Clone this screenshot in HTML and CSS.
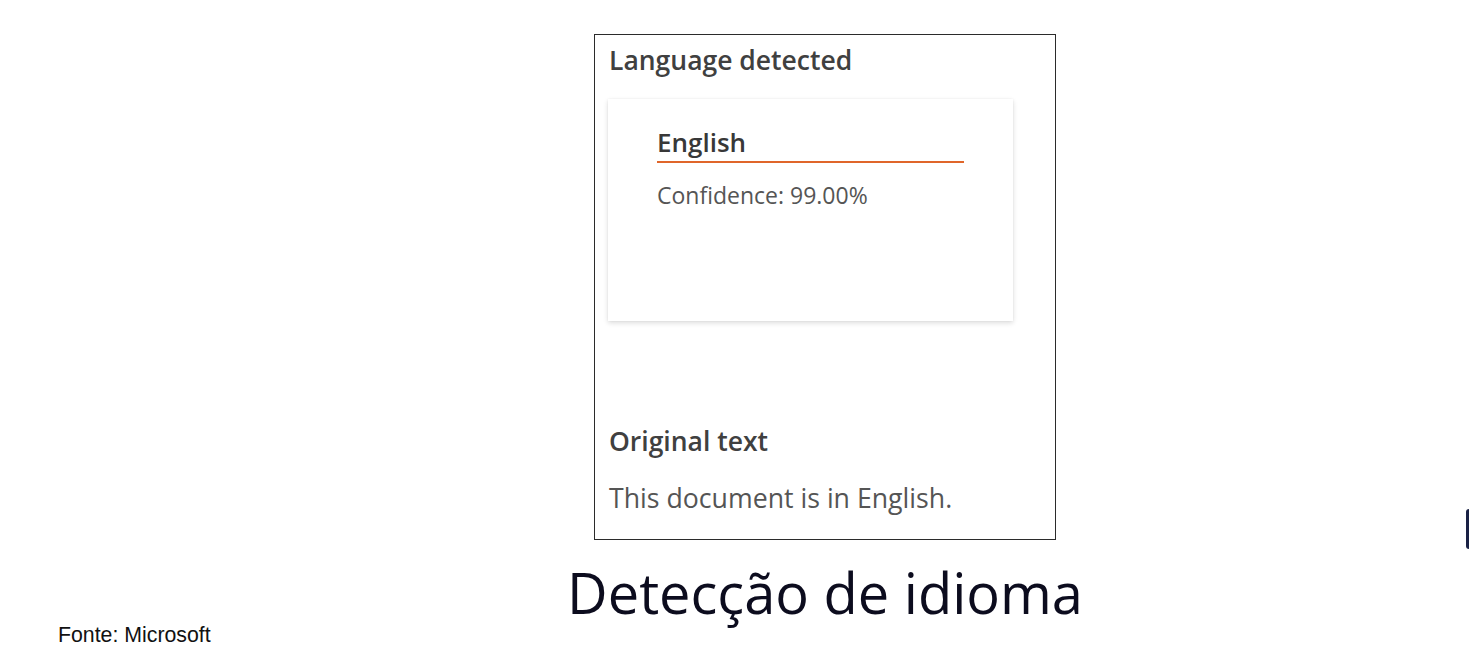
FILE: index.html
```html
<!DOCTYPE html>
<html>
<head>
<meta charset="utf-8">
<link rel="stylesheet" href="styles.css">
</head>
<body>
<div class="stage">
  <div class="column">
    <section class="panel">
      <h2 class="panel-heading">Language detected</h2>
      <div class="card">
        <div class="lang-name">English</div>
        <div class="confidence">Confidence: 99.00%</div>
      </div>
      <h2 class="panel-heading original">Original text</h2>
      <p class="original-text">This document is in English.</p>
    </section>
    <h1 class="slide-title">Detecção de idioma</h1>
  </div>
  <div class="source">Fonte: Microsoft</div>
  <div class="edge-mark"></div>
</div>
</body>
</html>
```

FILE: styles.css
```css
html, body {
  margin: 0;
  padding: 0;
  background: #ffffff;
  width: 1469px;
  height: 664px;
  overflow: hidden;
}

.stage {
  position: relative;
  width: 1469px;
  height: 664px;
  padding-top: 34px;
  box-sizing: border-box;
}

.column {
  margin-left: 594px;
  width: 462px;
  display: flex;
  flex-direction: column;
  align-items: center;
}

.panel {
  width: 462px;
  height: 506px;
  box-sizing: border-box;
  border: 1px solid #2b2b2b;
  padding: 9px 0 0 14px;
  font-family: "Open Sans", "Noto Sans", sans-serif;
}

.panel-heading {
  margin: 0;
  font-size: 26.5px;
  line-height: 32px;
  font-weight: 600;
  color: #404040;
}

.card {
  margin: 23px 0 0 -1px;
  width: 405px;
  height: 222px;
  box-sizing: border-box;
  padding: 27px 49px 0 49px;
  background: #fff;
  box-shadow: 0 2px 5px rgba(0, 0, 0, 0.14), 0 0 2px rgba(0, 0, 0, 0.05);
}

.lang-name {
  font-size: 26px;
  line-height: 32px;
  font-weight: 600;
  color: #383838;
  padding-bottom: 3px;
  border-bottom: 2px solid #e0662a;
}

.confidence {
  margin-top: 18px;
  font-size: 23px;
  line-height: 28px;
  color: #555;
}

.original {
  margin-top: 104px;
}

.original-text {
  margin: 25px 0 0 0;
  font-size: 26.7px;
  line-height: 32px;
  color: #555;
}

.slide-title {
  margin: 20px 0 0 0;
  white-space: nowrap;
  font-family: "Open Sans", "Noto Sans", sans-serif;
  font-weight: 400;
  font-size: 56px;
  line-height: 64px;
  color: #0c0c1e;
}

.source {
  margin: 0 0 0 58px;
  font-family: "Liberation Sans", Arial, sans-serif;
  font-size: 21.3px;
  line-height: 22px;
  color: #111;
}

.edge-mark {
  position: absolute;
  right: 0;
  top: 509px;
  width: 3px;
  height: 40px;
  background: #1a2145;
  border-radius: 3px 0 0 3px;
}
```
